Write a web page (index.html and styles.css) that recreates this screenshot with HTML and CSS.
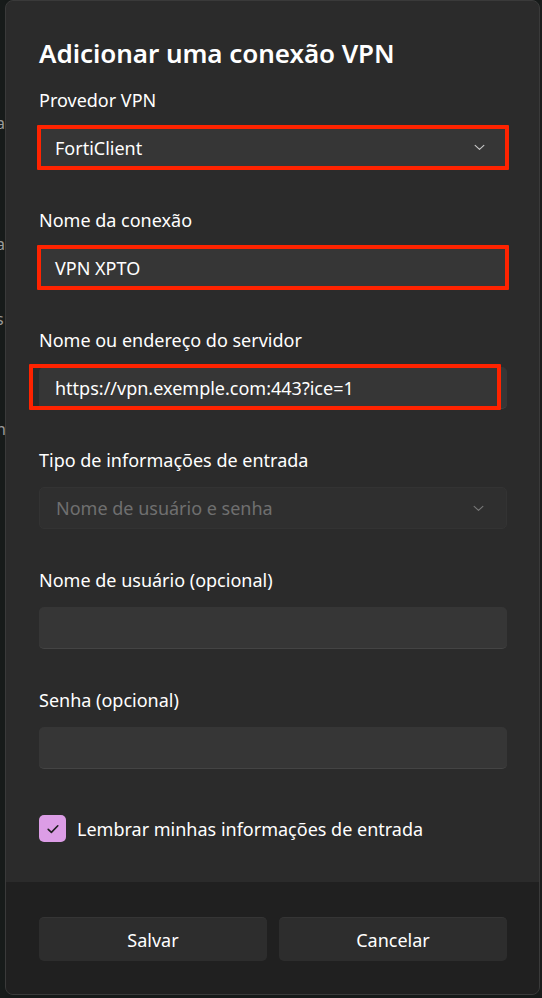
FILE: index.html
```html
<!DOCTYPE html>
<html lang="pt-BR">
<head>
<meta charset="utf-8">
<title>Adicionar uma conexão VPN</title>
<link rel="stylesheet" href="styles.css">
</head>
<body>
<div class="screen">
  <div class="behind">
    <span class="peek p1">a</span>
    <span class="peek p2">a</span>
    <span class="peek p3">s</span>
    <span class="peek p4">n</span>
  </div>
  <div class="dialog">
    <div class="content">
      <h1 class="title">Adicionar uma conexão VPN</h1>

      <div class="group">
        <div class="label">Provedor VPN</div>
        <div class="field select marked">
          <span class="value">FortiClient</span>
          <svg class="chev" viewBox="0 0 12 8" width="11" height="7"><path d="M1 1.5 L6 6.2 L11 1.5" fill="none" stroke="#c8c8c8" stroke-width="1.3" stroke-linecap="round" stroke-linejoin="round"/></svg>
        </div>
      </div>

      <div class="group">
        <div class="label">Nome da conexão</div>
        <div class="field marked"><span class="value">VPN XPTO</span></div>
      </div>

      <div class="group">
        <div class="label">Nome ou endereço do servidor</div>
        <div class="field marked shifted"><span class="value">https://vpn.exemple.com:443?ice=1</span></div>
      </div>

      <div class="group">
        <div class="label">Tipo de informações de entrada</div>
        <div class="field select disabled">
          <span class="value">Nome de usuário e senha</span>
          <svg class="chev" viewBox="0 0 12 8" width="11" height="7"><path d="M1 1.5 L6 6.2 L11 1.5" fill="none" stroke="#777" stroke-width="1.3" stroke-linecap="round" stroke-linejoin="round"/></svg>
        </div>
      </div>

      <div class="group">
        <div class="label">Nome de usuário (opcional)</div>
        <div class="field"></div>
      </div>

      <div class="group">
        <div class="label">Senha (opcional)</div>
        <div class="field"></div>
      </div>

      <div class="check-row">
        <span class="checkbox">
          <svg viewBox="0 0 16 16" width="16" height="16"><path d="M3.2 8.4 L6.4 11.4 L12.8 4.8" fill="none" stroke="#1e1e1e" stroke-width="1.6" stroke-linecap="round" stroke-linejoin="round"/></svg>
        </span>
        <span class="check-label">Lembrar minhas informações de entrada</span>
      </div>
    </div>
    <div class="footer">
      <button class="btn">Salvar</button>
      <button class="btn">Cancelar</button>
    </div>
  </div>
  <div class="edge"></div>
</div>
</body>
</html>
```

FILE: styles.css
```css
* { box-sizing: border-box; }
html, body { margin: 0; padding: 0; }
body {
  width: 542px;
  height: 998px;
  overflow: hidden;
  background: #161a19;
  font-family: "Noto Sans", "Open Sans", sans-serif;
  color: #ffffff;
}
.screen {
  display: flex;
  width: 542px;
  height: 998px;
}
.behind {
  width: 5px;
  flex: none;
  position: relative;
  overflow: hidden;
  background: #171b1a;
}
.peek {
  position: absolute;
  left: -4px;
  font-size: 16px;
  color: #9a9a9a;
}
.p1 { top: 112px; }
.p2 { top: 233px; }
.p3 { top: 308px; }
.p4 { top: 418px; }

.dialog {
  width: 535px;
  height: 995px;
  flex: none;
  background: #2b2b2b;
  border: 1px solid #3a3a3a;
  border-radius: 8px;
  overflow: hidden;
  display: flex;
  flex-direction: column;
}
.edge { flex: 1; background: #1b1b1b; }

.content {
  flex: 1;
  padding: 34px 32px 0 33px;
}
.title {
  margin: 0 0 17px 0;
  font-size: 26px;
  line-height: 36px;
  font-weight: 600;
  letter-spacing: -0.05px;
}
.group { margin-bottom: 39px; }
.label {
  font-size: 18px;
  line-height: 24px;
  margin-bottom: 15px;
  color: #ffffff;
}
.field {
  position: relative;
  height: 42px;
  border-radius: 5px;
  background: #363636;
  border-bottom: 1px solid #444;
  display: flex;
  align-items: center;
  padding: 0 16px;
  font-size: 18px;
}
.field .value { flex: 1; }
.select .chev { margin-right: 6px; }
.disabled {
  background: #2f2f2f;
  border: 1px solid #333;
  color: #6f6f6f;
}
.marked::after {
  content: "";
  position: absolute;
  left: -2px;
  right: -2px;
  top: -2px;
  bottom: -2px;
  border: 4px solid #ff2300;
  border-radius: 1px;
  pointer-events: none;
}
.shifted::after {
  left: -10px;
  right: 6px;
  top: -3px;
  bottom: -2px;
}

.check-row {
  display: flex;
  align-items: center;
  gap: 11px;
  height: 27px;
  margin-top: 46px;
}
.checkbox {
  width: 27px;
  height: 27px;
  flex: none;
  border-radius: 5px;
  background: #dc9de6;
  display: flex;
  align-items: center;
  justify-content: center;
}
.check-label { font-size: 18px; }

.footer {
  height: 112px;
  flex: none;
  background: #202020;
  display: grid;
  grid-template-columns: 1fr 1fr;
  gap: 12px;
  padding: 35px 32px 0 33px;
  align-items: start;
}
.btn {
  height: 44px;
  border-radius: 5px;
  border: none;
  border-top: 1px solid #353535;
  background: #2d2d2d;
  color: #ffffff;
  font-family: "Noto Sans", "Open Sans", sans-serif;
  font-size: 18px;
}
```
